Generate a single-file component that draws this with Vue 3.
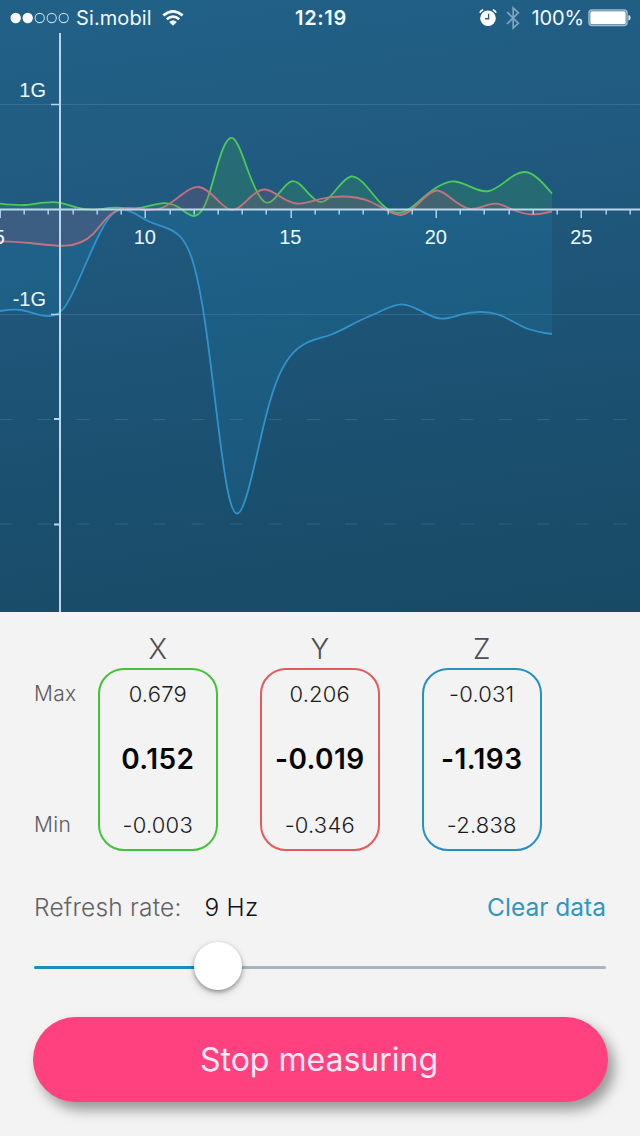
<template>
  <div class="screen">
    <section class="monitor">
      <header class="status-bar">
        <div class="status-left">
          <svg class="signal" viewBox="0 0 60 12">
            <circle
              v-for="n in 5"
              :key="n"
              :cx="n * 12 - 6.3"
              cy="6"
              :r="n <= 2 ? 5.2 : 4.6"
              :class="{ filled: n <= 2 }"
            />
          </svg>
          <span class="carrier">Si.mobil</span>
          <svg class="wifi" viewBox="0 0 22 16">
            <path d="M1.3 5.4Q11 -2.8 20.7 5.4" />
            <path d="M4.8 9.2Q11 4 17.2 9.2" />
            <path class="dot" d="M7.2 11.9Q11 8.8 14.8 11.9L11 15.8Z" />
          </svg>
        </div>
        <span class="clock">12:19</span>
        <div class="status-right">
          <svg class="alarm" viewBox="0 0 18 18">
            <circle cx="9" cy="9.2" r="7.8" fill="#fff" />
            <path d="M9.6 4.8V9.8H6" stroke="#285f86" stroke-width="1.4" fill="none" />
            <path d="M0.9 3.8Q1.8 1.3 4.2 0.8M17.1 3.8Q16.2 1.3 13.8 0.8" stroke="#fff" stroke-width="1.7" fill="none" />
          </svg>
          <svg class="bluetooth" viewBox="0 0 14 24">
            <path d="M1 6L12.3 17.2L7.2 22V2L12.3 6.8L1 18" />
          </svg>
          <span class="percent">100%</span>
          <svg class="battery" viewBox="0 0 44 18">
            <rect x="1" y="1" width="38" height="15.6" rx="3" fill="none" stroke="#9dbbd5" stroke-width="1.5" />
            <rect x="2.3" y="2.3" width="35.4" height="13" rx="1.6" fill="#fff" />
            <path d="M40.4 6Q42.6 6.3 42.6 8.8T40.4 11.6Z" fill="#d8ebf8" />
          </svg>
        </div>
      </header>

      <svg class="chart" viewBox="0 33 640 579">
        <g class="grid">
          <path d="M0 104.5H640M0 314.5H640" />
          <path class="dashed" d="M0 419.5H640M0 524H640" />
        </g>
        <g v-for="s in series" :key="s.name" :class="s.name">
          <path class="area" :d="area(s.points)" />
          <path class="line" :d="line(s.points)" />
        </g>
        <g class="axis">
          <path d="M60 33V612M0 209.5H640" />
          <path class="ticks" :d="ticks" />
          <path class="ticks" d="M51 104.5H60M51 314.5H60" />
          <path d="M54 419H60M54 524.5H60" />
        </g>
        <g class="labels">
          <text x="46" y="96.5" text-anchor="end">1G</text>
          <text x="46" y="305.5" text-anchor="end">-1G</text>
          <text
            v-for="(t, i) in [5, 10, 15, 20, 25]"
            :key="t"
            :x="-0.7 + i * 145.5"
            y="244"
            text-anchor="middle"
          >{{ t }}</text>
        </g>
      </svg>
    </section>

    <section class="panel">
      <div class="readings">
        <div class="row-labels">
          <span>Max</span>
          <span>Min</span>
        </div>
        <div v-for="a in axes" :key="a.name" class="reading">
          <div class="axis-name">{{ a.name }}</div>
          <div class="box" :class="a.color">
            <span>{{ a.max }}</span>
            <strong>{{ a.value }}</strong>
            <span>{{ a.min }}</span>
          </div>
        </div>
      </div>

      <div class="rate">
        <span class="rate-label">Refresh rate:</span>
        <span class="rate-value">{{ rate }} Hz</span>
        <button class="clear">Clear data</button>
      </div>
      <input
        v-model.number="rate"
        class="slider"
        type="range"
        min="0"
        max="29.5"
        step="0.5"
        :style="{ '--fill': fill + '%' }"
      />
      <button class="stop">Stop measuring</button>
    </section>
  </div>
</template>

<script setup>
import { ref, computed } from 'vue';

const rate = ref(9);
const fill = computed(() => (rate.value / 29.5) * 100);

const axes = [
  { name: 'X', color: 'green', max: '0.679', value: '0.152', min: '-0.003' },
  { name: 'Y', color: 'red', max: '0.206', value: '-0.019', min: '-0.346' },
  { name: 'Z', color: 'blue', max: '-0.031', value: '-1.193', min: '-2.838' },
];

const series = [
  {
    name: 'z',
    points: [
      [0, 311], [21, 310], [48, 316.2], [64, 308], [80, 277], [97, 239],
      [109, 218], [123, 209.7], [147, 220.5], [165, 227.3], [181, 237.5], [192, 259],
      [205, 322], [219, 432], [228, 492], [237.5, 513.5], [248, 491],
      [265, 420], [276, 383], [290, 356.5], [305, 343.7],
      [330, 335], [360, 320.5], [380, 311.5], [402, 304.3], [420, 310.5], [441, 318.6],
      [462, 314.3], [480, 312], [498, 314.5], [527, 328.5], [552, 334],
    ],
  },
  {
    name: 'x',
    points: [
      [0, 203.7], [25, 205], [57, 202.3], [77, 207.5], [92, 209.7], [115, 207.7], [140, 208], [165, 203.2],
      [180, 208.3], [194, 216], [207, 200], [219, 160], [232.5, 138], [247, 168],
      [266, 202.5], [291.5, 181.3], [320.5, 202], [351, 176.5],
      [367, 187], [382, 204.5], [398, 213], [424, 197],
      [455, 181.5], [489, 191], [525, 172], [552, 193.5],
    ],
  },
  {
    name: 'y',
    points: [
      [0, 241.3], [30, 243], [65, 245.7], [93, 234], [107, 218],
      [122, 208.7], [145, 210], [163, 207.5], [182, 194.5], [199, 187],
      [216, 198.5], [232, 210], [250, 197.5], [265, 189.5],
      [280, 196.5], [296, 203.5], [320, 199], [342, 196.5], [370, 201.5],
      [387, 210.5], [401, 215], [419, 203], [437, 190.5], [450, 197.5], [469, 208.7],
      [496, 203.7], [512, 209.3], [530, 214.3], [552, 211.5],
    ],
  },
];

// slopes of the natural cubic spline through all points
function slopes(p) {
  const n = p.length;
  const c = [0.5];
  const m = [(1.5 * (p[1][1] - p[0][1])) / (p[1][0] - p[0][0])];
  for (let i = 1; i < n; i++) {
    const a = 1 / (p[i][0] - p[i - 1][0]);
    const b = i < n - 1 ? 1 / (p[i + 1][0] - p[i][0]) : 0;
    const right = i < n - 1 ? (p[i + 1][1] - p[i][1]) * b * b : 0;
    const left = (p[i][1] - p[i - 1][1]) * a * a;
    const div = 2 * (a + b) - a * c[i - 1];
    c[i] = b / div;
    m[i] = (3 * (left + right) - a * m[i - 1]) / div;
  }
  for (let i = n - 2; i >= 0; i--) {
    m[i] -= c[i] * m[i + 1];
  }
  return m;
}

function line(p) {
  const m = slopes(p);
  let d = `M${p[0]}`;
  for (let i = 1; i < p.length; i++) {
    const [x0, y0] = p[i - 1];
    const [x1, y1] = p[i];
    const h = (x1 - x0) / 3;
    d += `C${x0 + h} ${y0 + m[i - 1] * h} ${x1 - h} ${y1 - m[i] * h} ${x1} ${y1}`;
  }
  return d;
}

function area(p) {
  return `${line(p)}V209.5H0Z`;
}

const ticks = Array.from({ length: 27 }, (_, i) => {
  const x = Math.round(i * 24.22) + 0.2;
  return `M${x} 210V${i % 6 === 0 ? 218 : 214.5}`;
}).join('');
</script>

<style>
body {
  margin: 0;
}
</style>

<style scoped>
.screen {
  width: 640px;
  height: 1136px;
  overflow: hidden;
  background: #f3f3f4;
  font-family: Inter, "Liberation Sans", sans-serif;
}

.monitor {
  height: 612px;
  background: linear-gradient(172deg, #216188 0%, #215a80 30%, #1b5070 68%, #184a65 100%);
}

.status-bar {
  display: grid;
  grid-template-columns: 1fr auto 1fr;
  align-items: center;
  box-sizing: border-box;
  height: 33px;
  padding: 2px 8px 0 10px;
  color: #f2faff;
  font-size: 20px;
}

.status-left,
.status-right {
  display: flex;
  align-items: center;
}

.status-right {
  justify-content: flex-end;
}

.signal {
  width: 60px;
  height: 12px;
  fill: none;
  stroke: #b9d8ee;
  stroke-width: 1.1;
}

.signal .filled {
  fill: #fff;
  stroke: none;
}

.carrier {
  margin-left: 6px;
  letter-spacing: 0.1px;
}

.wifi {
  width: 22px;
  height: 16px;
  margin-left: 10px;
  fill: none;
  stroke: #f4fbff;
  stroke-width: 2.7;
}

.wifi .dot {
  fill: #f4fbff;
  stroke: none;
}

.clock {
  font-weight: 600;
  letter-spacing: 0.7px;
}

.percent {
  letter-spacing: -0.1px;
}

.alarm {
  width: 18px;
  height: 18px;
}

.bluetooth {
  width: 14px;
  height: 24px;
  margin: 0 11px 0 9px;
  fill: none;
  stroke: #7fa5c2;
  stroke-width: 1.7;
}

.battery {
  width: 44px;
  height: 18px;
  margin-left: 4px;
}

.chart {
  display: block;
  width: 640px;
  height: 579px;
}

.grid {
  stroke: rgba(160, 200, 225, 0.17);
}

.grid .dashed {
  stroke-dasharray: 13 25.4;
  stroke-dashoffset: 0.5;
}

.line {
  fill: none;
  stroke-width: 1.8;
}

.area {
  stroke: none;
}

.x .line { stroke: #4bc95a; }
.y .line { stroke: #c3727f; }
.z .line { stroke: #3293cc; }
.x .area { fill: rgba(65, 180, 75, 0.2); }
.y .area { fill: rgba(200, 80, 100, 0.17); }
.z .area { fill: rgba(30, 140, 190, 0.18); }

.axis {
  fill: none;
  stroke: #b9d7ec;
  stroke-width: 2;
}

.axis .ticks {
  stroke-width: 1.4;
}

.labels {
  fill: #edf8ff;
  font-family: "Liberation Sans", Arial, sans-serif;
  font-size: 20px;
}

.panel {
  padding: 21px 34px 0;
}

.readings {
  display: flex;
}

.row-labels {
  display: flex;
  flex-direction: column;
  justify-content: space-between;
  box-sizing: border-box;
  width: 64px;
  height: 218px;
  padding: 48px 0 13px;
  color: #5c5c5e;
  font-size: 21px;
  font-weight: 300;
  letter-spacing: 0.3px;
  line-height: 26px;
}

.reading {
  width: 119.5px;
}

.reading + .reading {
  margin-left: 42.5px;
}

.axis-name {
  height: 35px;
  color: #4f4f51;
  font-size: 28px;
  font-weight: 300;
  line-height: 32px;
  text-align: center;
}

.box {
  display: flex;
  flex-direction: column;
  align-items: center;
  justify-content: space-between;
  box-sizing: border-box;
  height: 183px;
  padding: 11px 0;
  border: 2px solid;
  border-radius: 26px;
}

.box.green { border-color: #45c13a; }
.box.red { border-color: #e35b5c; }
.box.blue { border-color: #2690c2; }

.box span {
  color: #1b1b1c;
  font-size: 22px;
  font-weight: 300;
  letter-spacing: 0.2px;
  line-height: 26px;
}

.box strong {
  margin-top: -2px;
  color: #050505;
  font-size: 28px;
  font-weight: 600;
  letter-spacing: 0.4px;
  line-height: 34px;
}

.rate {
  display: flex;
  align-items: center;
  height: 32px;
  margin-top: 40px;
  font-size: 24.5px;
  font-weight: 300;
  letter-spacing: 0.2px;
}

.rate-label {
  color: #626264;
}

.rate-value {
  margin-left: 23px;
  color: #111;
}

button {
  border: 0;
  font-family: inherit;
}

.clear {
  margin-left: auto;
  padding: 0;
  background: none;
  color: #3096c4;
  font-size: 24.5px;
}

.slider {
  display: block;
  width: 572px;
  height: 50px;
  margin: 19px 0 0;
  appearance: none;
  background: transparent;
}

.slider::-webkit-slider-runnable-track {
  height: 3px;
  border-radius: 1.5px;
  background: linear-gradient(90deg, #168fbd var(--fill), #abb4c0 var(--fill));
}

.slider::-webkit-slider-thumb {
  width: 48px;
  height: 48px;
  margin-top: -24px;
  appearance: none;
  border-radius: 50%;
  background: #fff;
  box-shadow: 0 2px 4px rgba(0, 0, 0, 0.35), 0 4px 10px rgba(0, 0, 0, 0.12);
}

.stop {
  display: block;
  width: 575px;
  height: 85px;
  margin: 25px 0 0 -1px;
  padding: 0 3px 0 0;
  border-radius: 43px;
  background: #ff417f;
  box-shadow: 6px 8px 13px rgba(0, 0, 0, 0.38);
  color: #ffe9f4;
  font-size: 32px;
  font-weight: 400;
}
</style>
